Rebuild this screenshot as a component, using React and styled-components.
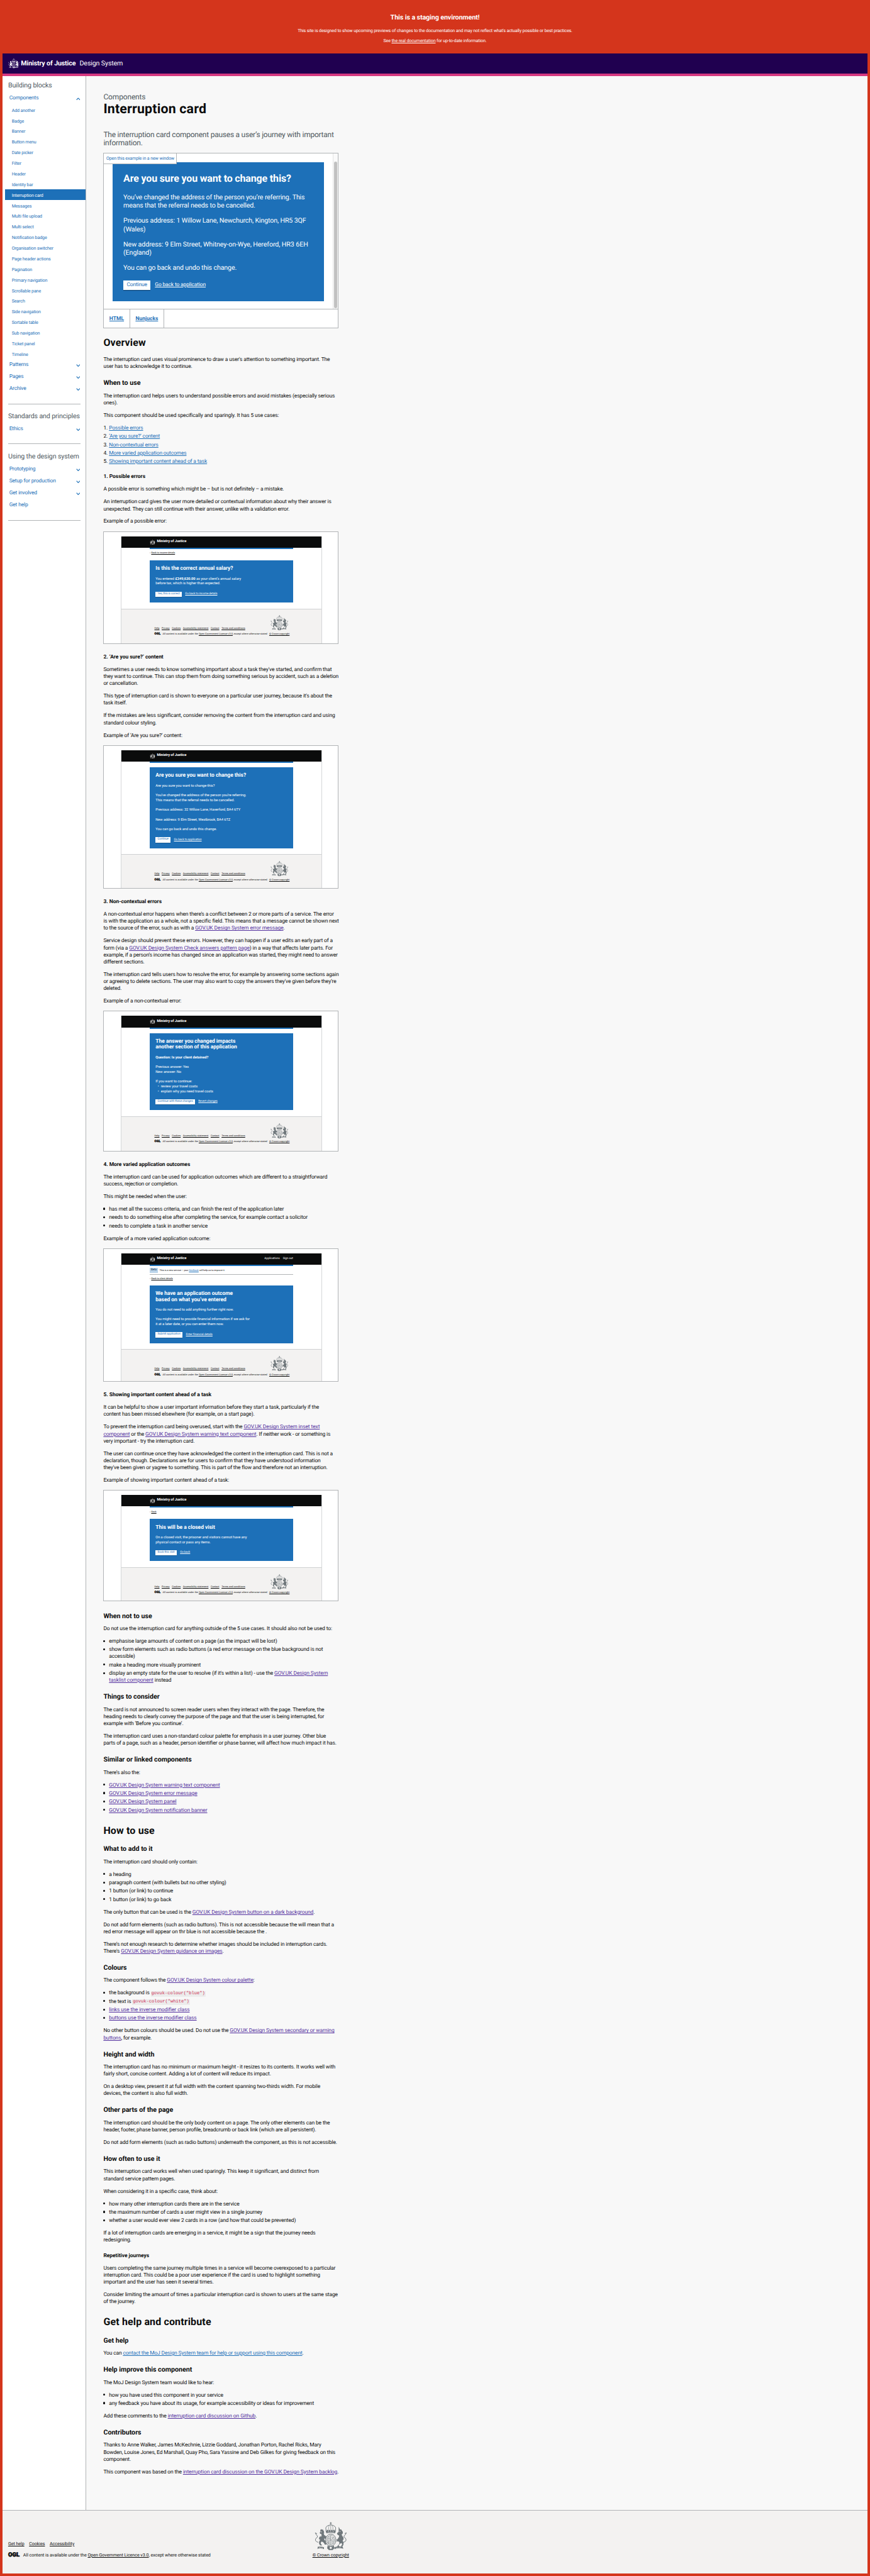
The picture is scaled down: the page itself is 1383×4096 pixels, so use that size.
import React from "react";
import styled, { createGlobalStyle, css } from "styled-components";

const SCALE = 1383 / 3112;

const c = {
  red: "#d4351c",
  purple: "#200050",
  pink: "#d53880",
  blue: "#1d70b8",
  visited: "#54319f",
  text: "#0b0c0c",
  secondary: "#505a5f",
  border: "#b1b4b6",
  panel: "#f8f8f8",
  footer: "#f3f2f1",
};

const Global = createGlobalStyle`
  html, body { margin: 0; padding: 0; background: ${c.red}; }
  *, *::before, *::after { box-sizing: border-box; }
  h1, h2, h3, h4, p, ul, ol { margin: 0; padding: 0; }
  ul, ol { list-style: none; }
`;

const Page = styled.div`
  zoom: ${SCALE};
  width: 3112px;
  height: 9216px;
  display: flex;
  flex-direction: column;
  border: 10px solid ${c.red};
  border-top: 0;
  background: ${c.red};
  color: ${c.text};
  font-family: Roboto, "Liberation Sans", sans-serif;
  font-size: 19px;
  line-height: 25px;
  letter-spacing: -0.0165em;
  text-rendering: geometricPrecision;
  white-space: nowrap;
  a {
    color: inherit;
    text-decoration: underline;
    text-decoration-thickness: 1px;
    text-underline-offset: 0.16em;
  }
`;

/* ---------- staging banner and header ---------- */

const Staging = styled.div`
  height: 190.7px;
  padding-top: 47.8px;
  color: #fff;
  text-align: center;
`;
const StagingTitle = styled.h2`
  font-size: 24px;
  line-height: 30px;
  letter-spacing: -0.008em;
  margin-bottom: 18.5px;
`;
const StagingText = styled.p`
  font-size: 16px;
  margin-bottom: 11.7px;
`;

const Header = styled.header`
  height: 82px;
  border-bottom: 10px solid ${c.pink};
  background: ${c.purple};
  color: #fff;
  display: flex;
  align-items: center;
  padding: 0 20px;
  font-size: 24px;
  line-height: 30px;
`;
const HeaderOrg = styled.strong`
  margin: -2px 14px 0 6px;
`;
const HeaderProduct = styled.span`
  margin-top: -2px;
`;

const CrestSvg = styled.svg`
  display: block;
  flex: none;
`;

function Crest({ width, height, color, paper }) {
  return (
    <CrestSvg width={width} height={height} viewBox="46 33 262 228" preserveAspectRatio="none">
      <g fill={color} stroke="none">
        <path d="M174 36h6v5h5v5h-5v6h-6v-6h-5v-5h5z" />
        <path d="M134 96l9 8 8-9 9 8 8-9 9 9 9-9 8 9 9-8 8 9 9-8-6 23q-35 -8-74 0z" />
        <path d="M141 119q36-8 72 0v5q-36-8-72 0z" />
        <path d="M92 100l8-10 6 6 8-4 2 9 8 6-4 6 5 7-5 6 4 12 12 8 14 10 4 10-12-2 6 8-14-2-10-6 2 14 12 10-2 12 8 8-2 6h-14l-4-10-10-10-12-4-6 10 2 10 8 6-2 6-14-2-8-16 2-16 8-12-10-6 2-14 14-14 6-12-12-2-4-8 6-10z" />
        <path d="M241 72l12 22 8-2 6 10 8 12-2 14-8 4 4 12 10 12 2 14-8 14 8 14-2 18-8 14-12 2 4-10 6-8-4-12-14 6-10 14 6 8-4 8-14 2 2-14 14-14 2-16-10-8-16 2 8-8-8-6 12-6 10-16 2-12-10-4-8-10 4-8 10-6z" />
        <path d="M72 232q26-4 50 4l0 14q-24-8-46-4l-6 4zM206 236q30-10 68-4l4 16-12-4q-30-4-58 6z" />
        <path d="M152 222l12 6 13-6 13 6 12-6 4 22-14 14h-30l-14-14z" />
      </g>
      <g fill="none" stroke={color} strokeWidth="5">
        <path d="M140 98q-10-24 12-34 13-6 25-8 12 2 25 8 22 10 12 34" />
        <path d="M177 54v44M160 98q-4-24 6-38M194 98q4-24-6-38" strokeWidth="3" />
        <path d="M76 196q-26-6-22-24 4-12 14-16 8-12-8-20l-8-16 14 8" />
        <path d="M278 196q26-6 22-24-4-12-14-16-8-12 8-20l10-16-14 6" />
      </g>
      <ellipse cx="177" cy="178" rx="42" ry="48" fill={paper} stroke={color} strokeWidth="5" />
      <ellipse cx="177" cy="178" rx="32" ry="38" fill={paper} stroke={color} strokeWidth="3" />
      <g stroke={color} strokeWidth="4" fill="none">
        <path d="M177 142v72M146 178h62M152 154h20M150 166h24M186 156l14 12M200 154l-12 14M156 186v22M164 184v28M184 190h20M184 202h18" />
      </g>
      <g fill={paper}>
        <circle cx="158" cy="110" r="3" />
        <circle cx="177" cy="109" r="3" />
        <circle cx="196" cy="110" r="3" />
        <circle cx="177" cy="240" r="9" />
        <path d="M82 236h6v5h-6zM94 237h5v5h-5zM106 239h5v5h-5zM218 239h5v5h-5zM232 237h5v5h-5zM248 236h6v5h-6z" />
        <path d="M98 108l8 4-6 6zM96 138l10 6-12 8zM250 104l6 6-8 2z" />
      </g>
    </CrestSvg>
  );
}

/* ---------- layout ---------- */

const Body = styled.div`
  display: flex;
  height: 8707.3px;
`;
const Sidebar = styled.nav`
  width: 300px;
  flex: none;
  padding: 18.4px 0 0 20px;
  background: #fff;
  border-right: 1px solid ${c.border};
  color: ${c.blue};
`;
const NavHeading = styled.h3`
  font-size: 24px;
  font-weight: 400;
  line-height: 30px;
  color: ${c.secondary};
  margin-bottom: 10px;
`;
const NavRow = styled.div`
  height: 42.8px;
  padding: 1px 20px 0 4px;
  display: flex;
  align-items: center;
  justify-content: space-between;
`;
const NavSub = styled.div`
  height: 38px;
  margin-left: -10px;
  padding: 3.4px 0 0 23px;
  font-size: 16px;
  line-height: 35.4px;
  ${(p) => p.$current && css`background: ${c.blue}; color: #fff;`}
`;
const NavRule = styled.div`
  width: 260px;
  height: 0;
  margin: 30px 0 29px;
  border-top: 2px solid ${c.border};
`;
const ChevronSvg = styled.svg`
  display: block;
  ${(p) => p.$up && css`transform: rotate(180deg);`}
`;
const Chevron = ({ up }) => (
  <ChevronSvg $up={up} width="15" height="10" viewBox="0 0 15 10">
    <path d="M1.5 1.5L7.5 8L13.5 1.5" fill="none" stroke={c.blue} strokeWidth="2.6" />
  </ChevronSvg>
);

const Main = styled.main`
  width: 901px;
  padding: 60.8px 0 0 61px;
`;
const MainArea = styled.div`
  flex: 1;
  background: ${c.panel};
`;
const Caption = styled.span`
  display: block;
  font-size: 27px;
  line-height: 30px;
  color: ${c.secondary};
  margin-bottom: 4px;
`;
const H1 = styled.h1`
  font-size: 48px;
  line-height: 50px;
  letter-spacing: 0.008em;
  margin-bottom: 51px;
`;
const Lead = styled.p`
  font-size: 27px;
  line-height: 30px;
  letter-spacing: -0.0195em;
  color: ${c.secondary};
  margin-bottom: 18.7px;
`;
const H2 = styled.h2`
  font-size: 36px;
  line-height: 40px;
  letter-spacing: 0.009em;
  margin: 39.5px 0 30px;
`;
const H3 = styled.h3`
  font-size: 24px;
  line-height: 30px;
  letter-spacing: 0;
  margin: 29.2px 0 20.6px;
`;
const H4 = styled.h4`
  letter-spacing: -0.002em;
  margin: 29.5px 0 20px;
`;
const P = styled.p`
  margin-bottom: 20px;
`;
const List = styled.ul`
  margin-bottom: 20px;
`;
const Item = styled.li`
  padding-left: 20px;
  margin-bottom: 5px;
  &:last-child { margin-bottom: 0; }
  &::before {
    content: "";
    display: inline-block;
    width: 7px;
    height: 7px;
    margin: 0 14.5px 0 -21.5px;
    border-radius: 50%;
    background: ${c.text};
    vertical-align: 3px;
  }
`;
const Numbered = styled(List)`
  counter-reset: step;
`;
const Step = styled(Item)`
  counter-increment: step;
  &::before {
    content: counter(step) ".";
    width: 20px;
    height: auto;
    margin: 0 0 0 -20px;
    background: none;
    border-radius: 0;
    vertical-align: baseline;
  }
`;
const LinkNew = styled.a`
  && { color: ${c.blue}; }
`;
const V = styled.a`
  &&& { color: ${c.visited}; letter-spacing: -0.01em; }
`;
const L = ({ children }) => <LinkNew as="a">{children}</LinkNew>;
const Code = styled.code`
  font-family: "Liberation Mono", monospace;
  font-size: 16px;
  line-height: 1;
  letter-spacing: 0;
  color: #cf2f55;
  background: #ececec;
  padding: 1px 2px;
`;

/* ---------- live example ---------- */

const Example = styled.section`
  width: 840px;
  height: 628.2px;
  margin-bottom: 31px;
  border: 2px solid ${c.border};
  background: #fff;
  display: flex;
  flex-direction: column;
  & + h2 { margin-top: 0; }
`;
const ExampleView = styled.div`
  position: relative;
  flex: 1;
  display: flex;
  justify-content: space-between;
  border-bottom: 2px solid ${c.border};
`;
const OpenLink = styled.span`
  position: absolute;
  top: 0;
  left: 0;
  width: 260px;
  height: 37px;
  padding: 6px 0 0 8px;
  background: #fff;
  border: solid ${c.border};
  border-width: 0 2px 2px 0;
  font-size: 16px;
  line-height: 22px;
  color: ${c.blue};
`;
const BigCard = styled.div`
  width: 757px;
  height: 497px;
  margin: 32.3px 0 0 30px;
  padding: 38px 39px;
  background: ${c.blue};
  color: #fff;
  font-size: 24px;
  line-height: 30px;
`;
const BigTitle = styled.h2`
  font-size: 36px;
  line-height: 40px;
  letter-spacing: -0.0095em;
  margin-bottom: 30.8px;
`;
const BigText = styled.p`
  margin-bottom: 24.3px;
  ${(p) => p.$loose && css`letter-spacing: -0.008em;`}
`;
const Actions = styled.div`
  display: flex;
  align-items: center;
  gap: 16px;
  margin-top: 30px;
  font-size: 19px;
  line-height: 25px;
`;
const Button = styled.span`
  padding: 6px 12px 4px;
  background: #fff;
  color: ${c.blue};
  box-shadow: 0 3px 0 #144e81;
`;
const ScrollTrack = styled.div`
  width: 17px;
  background: #fafafa;
  border-left: 2px solid #e4e4e4;
  padding: 29px 0 4px 3px;
`;
const ScrollThumb = styled.div`
  width: 10px;
  height: 100%;
  border-radius: 5px;
  background: #c1c1c1;
`;
const Tabs = styled.div`
  display: flex;
  height: 65px;
  color: ${c.blue};
  font-weight: 700;
  letter-spacing: 0.006em;
`;
const Tab = styled.span`
  padding: 21.5px 20px 0 19px;
  border-right: 2px solid ${c.border};
`;

/* ---------- framed examples ---------- */

const Frame = styled.figure`
  width: 841px;
  height: ${(p) => p.$h}px;
  margin: 21px 0 36.3px;
  padding: 15px 0 0 60px;
  border: 2px solid ${c.border};
  background: #fff;
  overflow: hidden;
`;
const Screen = styled.div`
  width: 719px;
  border: solid #d5d7d8;
  border-width: 0 1.5px;
  height: 700px;
  font-size: 12.9px;
  line-height: 17.35px;
  letter-spacing: -0.009em;
`;
const ScreenBar = styled.div`
  height: 41.5px;
  margin: 0 -1px;
  padding: 0 102px;
  display: flex;
  align-items: center;
  background: ${c.text};
  color: #fff;
  strong { margin: 1px auto 0 6px; font-size: 13px; letter-spacing: -0.0165em; }
`;
const ScreenNav = styled.span`
  margin-left: 11px;
  font-size: 10.2px;
`;
const ScreenBody = styled.div`
  width: 514px;
  margin-left: 101px;
  border-top: 5.5px solid ${c.blue};
  font-size: 8.7px;
`;
const Phase = styled.div`
  display: flex;
  align-items: center;
  gap: 6px;
  padding: 6.5px 0 5px;
  border-bottom: 2px solid ${c.border};
`;
const Tag = styled.span`
  width: 29px;
  height: 17.5px;
  background: #bbd4ea;
  color: #0c2d4a;
  font-size: 10.2px;
  text-align: center;
`;
const Back = styled.div`
  display: flex;
  align-items: center;
  gap: 3px;
  height: ${(p) => (p.$tight ? 38 : 40.5)}px;
  padding-bottom: ${(p) => (p.$tight ? 12 : 13)}px;
`;
const Gap = styled.div`
  height: 16px;
`;
const Card = styled.div`
  padding: 21px 21px 20px;
  background: ${c.blue};
  color: #fff;
  font-size: 12.9px;
  margin-bottom: 21.5px;
`;
const CardTitle = styled.h3`
  font-size: 19.2px;
  line-height: 21.4px;
  letter-spacing: -0.004em;
  margin-bottom: 17.6px;
`;
const CardText = styled.p`
  margin-bottom: 17.2px;
`;
const CardBullet = styled.span`
  display: inline-block;
  width: 19px;
  padding-left: 8px;
`;
const CardActions = styled.div`
  display: flex;
  align-items: center;
  gap: 12.5px;
  font-size: 10.25px;
`;
const CardButton = styled.span`
  padding: 0 7px;
  line-height: 19px;
  background: #fff;
  color: ${c.blue};
  letter-spacing: -0.0165em;
  box-shadow: 0 1.5px 0 #144e81;
`;
const ScreenFooter = styled.div`
  height: 300px;
  border-top: 1.5px solid #cfd1d2;
  background: ${c.footer};
  display: flex;
  padding: 22px 0 0 118px;
  font-size: 8.7px;
  line-height: 14px;
  letter-spacing: 0.006em;
`;
const ScreenMeta = styled.div`
  width: 411px;
  padding-top: 39px;
`;
const MetaLinks = styled.div`
  display: flex;
  gap: ${(p) => p.$gap}px;
  margin-bottom: ${(p) => p.$mb}px;
`;
const Licence = styled.div`
  display: flex;
  align-items: center;
`;
const Ogl = styled.strong`
  width: ${(p) => p.$w}px;
  font-size: ${(p) => p.$size}px;
  font-weight: 900;
  letter-spacing: 0.02em;
  -webkit-text-stroke: 0.07em ${c.text};
`;
const Copyright = styled.div`
  display: flex;
  flex-direction: column;
  align-items: center;
  width: ${(p) => p.$w}px;
  gap: ${(p) => p.$gap}px;
`;

function Screenshot({ height, nav, phase, back, title, children, action, secondary }) {
  return (
    <Frame $h={height}>
      <Screen>
        <ScreenBar>
          <Crest width={20} height={17.5} color="#fff" paper="#0b0c0c" />
          <strong>Ministry of Justice</strong>
          {nav && nav.map((n) => <ScreenNav key={n}>{n}</ScreenNav>)}
        </ScreenBar>
        <ScreenBody>
          {phase && (
            <Phase>
              <Tag>Beta</Tag>
              <span>This is a new service – your <L>feedback</L> will help us to improve it.</span>
            </Phase>
          )}
          {back ? <Back $tight={phase}><span>‹</span><a>{back}</a></Back> : <Gap />}
          <Card>
            <CardTitle>{title}</CardTitle>
            {children}
            <CardActions>
              <CardButton>{action}</CardButton>
              <a>{secondary}</a>
            </CardActions>
          </Card>
        </ScreenBody>
        <ScreenFooter>
          <ScreenMeta>
            <MetaLinks $gap={8} $mb={7.3}>
              <a>Help</a><a>Privacy</a><a>Cookies</a><a>Accessibility statement</a><a>Contact</a><a>Terms and conditions</a>
            </MetaLinks>
            <Licence>
              <Ogl $w={29.5} $size={11}>OGL</Ogl>
              <span>All content is available under the <a>Open Government Licence v3.0</a>, except where otherwise stated</span>
            </Licence>
          </ScreenMeta>
          <Copyright $w={72} $gap={5.5}>
            <Crest width={64} height={54.5} color="#6f777b" paper={c.footer} />
            <a>© Crown copyright</a>
          </Copyright>
        </ScreenFooter>
      </Screen>
    </Frame>
  );
}

/* ---------- footer ---------- */

const Footer = styled.footer`
  flex: 1;
  display: flex;
  padding: 40px 0 0 20px;
  border-top: 2px solid ${c.border};
  background: ${c.footer};
  font-size: 16px;
  line-height: 24px;
  letter-spacing: -0.006em;
`;
const FooterMeta = styled.div`
  width: 1088px;
  padding-top: 68.5px;
`;

const components = [
  "Add another", "Badge", "Banner", "Button menu", "Date picker", "Filter", "Header", "Identity bar",
  "Interruption card", "Messages", "Multi file upload", "Multi select", "Notification badge",
  "Organisation switcher", "Page header actions", "Pagination", "Primary navigation", "Scrollable pane",
  "Search", "Side navigation", "Sortable table", "Sub navigation", "Ticket panel", "Timeline",
];

export default function App() {
  return (
    <>
      <Global />
      <Page>
        <Staging>
          <StagingTitle>This is a staging environment!</StagingTitle>
          <StagingText>This site is designed to show upcoming previews of changes to the documentation and may not reflect what's actually possible or best practices.</StagingText>
          <StagingText>See <a>the real documentation</a> for up-to-date information.</StagingText>
        </Staging>
        <Header>
          <Crest width={40} height={35} color="#fff" paper={c.purple} />
          <HeaderOrg>Ministry of Justice</HeaderOrg>
          <HeaderProduct>Design System</HeaderProduct>
        </Header>
        <Body>
          <Sidebar>
            <NavHeading>Building blocks</NavHeading>
            <NavRow>Components<Chevron up /></NavRow>
            {components.map((n) => <NavSub key={n} $current={n === "Interruption card"}>{n}</NavSub>)}
            <NavRow>Patterns<Chevron /></NavRow>
            <NavRow>Pages<Chevron /></NavRow>
            <NavRow>Archive<Chevron /></NavRow>
            <NavRule />
            <NavHeading>Standards and principles</NavHeading>
            <NavRow>Ethics<Chevron /></NavRow>
            <NavRule />
            <NavHeading>Using the design system</NavHeading>
            <NavRow>Prototyping<Chevron /></NavRow>
            <NavRow>Setup for production<Chevron /></NavRow>
            <NavRow>Get involved<Chevron /></NavRow>
            <NavRow>Get help</NavRow>
            <NavRule />
          </Sidebar>
          <MainArea>
            <Main>
              <Caption>Components</Caption>
              <H1>Interruption card</H1>
              <Lead>The interruption card component pauses a user’s journey with important<br />information.</Lead>
              <Example>
                <ExampleView>
                  <BigCard>
                    <BigTitle>Are you sure you want to change this?</BigTitle>
                    <BigText>You’ve changed the address of the person you’re referring. This<br />means that the referral needs to be cancelled.</BigText>
                    <BigText>Previous address: 1 Willow Lane, Newchurch, Kington, HR5 3QF<br />(Wales)</BigText>
                    <BigText $loose>New address: 9 Elm Street, Whitney-on-Wye, Hereford, HR3 6EH<br />(England)</BigText>
                    <BigText>You can go back and undo this change.</BigText>
                    <Actions><Button>Continue</Button><a>Go back to application</a></Actions>
                  </BigCard>
                  <ScrollTrack><ScrollThumb /></ScrollTrack>
                  <OpenLink>Open this example in a new window</OpenLink>
                </ExampleView>
                <Tabs><Tab><a>HTML</a></Tab><Tab><a>Nunjucks</a></Tab></Tabs>
              </Example>

              <H2>Overview</H2>
              <P>The interruption card uses visual prominence to draw a user's attention to something important. The<br />user has to acknowledge it to continue.</P>
              <H3>When to use</H3>
              <P>The interruption card helps users to understand possible errors and avoid mistakes (especially serious<br />ones).</P>
              <P>This component should be used specifically and sparingly. It has 5 use cases:</P>
              <Numbered as="ol">
                <Step><L>Possible errors</L></Step>
                <Step><L>‘Are you sure?’ content</L></Step>
                <Step><L>Non-contextual errors</L></Step>
                <Step><L>More varied application outcomes</L></Step>
                <Step><L>Showing important content ahead of a task</L></Step>
              </Numbered>
              <H4>1. Possible errors</H4>
              <P>A possible error is something which might be – but is not definitely – a mistake.</P>
              <P>An interruption card gives the user more detailed or contextual information about why their answer is<br />unexpected. They can still continue with their answer, unlike with a validation error.</P>
              <P>Example of a possible error:</P>
              <Screenshot height={403} back="Back to income details" title="Is this the correct annual salary?" action="Yes, this is correct" secondary="Go back to income details">
                <CardText>You entered <b>£349,630.00</b> as your client’s annual salary<br />before tax, which is higher than expected.</CardText>
              </Screenshot>

              <H4>2. ‘Are you sure?’ content</H4>
              <P>Sometimes a user needs to know something important about a task they've started, and confirm that<br />they want to continue. This can stop them from doing something serious by accident, such as a deletion<br />or cancellation.</P>
              <P>This type of interruption card is shown to everyone on a particular user journey, because it's about the<br />task itself.</P>
              <P>If the mistakes are less significant, consider removing the content from the interruption card and using<br />standard colour styling.</P>
              <P>Example of ‘Are you sure?’ content:</P>
              <Screenshot height={513.5} title="Are you sure you want to change this?" action="Continue" secondary="Go back to application">
                <CardText>Are you sure you want to change this?</CardText>
                <CardText>You’ve changed the address of the person you’re referring.<br />This means that the referral needs to be cancelled.</CardText>
                <CardText>Previous address: 32 Willow Lane, Haverford, BA4 6TY</CardText>
                <CardText>New address: 9 Elm Street, Westbrook, BA4 6TZ</CardText>
                <CardText>You can go back and undo this change.</CardText>
              </Screenshot>

              <H4>3. Non-contextual errors</H4>
              <P>A non-contextual error happens when there’s a conflict between 2 or more parts of a service. The error<br />is with the application as a whole, not a specific field. This means that a message cannot be shown next<br />to the source of the error, such as with a <V>GOV.UK Design System error message</V>.</P>
              <P>Service design should prevent these errors. However, they can happen if a user edits an early part of a<br />form (via a <V>GOV.UK Design System Check answers pattern page</V>) in a way that affects later parts. For<br />example, if a person’s income has changed since an application was started, they might need to answer<br />different sections.</P>
              <P>The interruption card tells users how to resolve the error, for example by answering some sections again<br />or agreeing to delete sections. The user may also want to copy the answers they've given before they’re<br />deleted.</P>
              <P>Example of a non-contextual error:</P>
              <Screenshot height={502.5} title={<>The answer you changed impacts<br />another section of this application</>} action="Continue with these changes" secondary="Revert changes">
                <CardText><b>Question: Is your client detained?</b></CardText>
                <CardText>Previous answer: Yes<br />New answer: No</CardText>
                <CardText>If you want to continue:<br /><CardBullet>•</CardBullet>review your travel costs<br /><CardBullet>•</CardBullet>explain why you need travel costs</CardText>
              </Screenshot>

              <H4>4. More varied application outcomes</H4>
              <P>The interruption card can be used for application outcomes which are different to a straightforward<br />success, rejection or completion.</P>
              <P>This might be needed when the user:</P>
              <List>
                <Item>has met all the success criteria, and can finish the rest of the application later</Item>
                <Item>needs to do something else after completing the service, for example contact a solicitor</Item>
                <Item>needs to complete a task in another service</Item>
              </List>
              <P>Example of a more varied application outcome:</P>
              <Screenshot height={477.5} nav={["Applications", "Sign out"]} phase back="Back to client details" title={<>We have an application outcome<br />based on what you’ve entered</>} action="Submit application" secondary="Enter financial details">
                <CardText>You do not need to add anything further right now.</CardText>
                <CardText>You might need to provide financial information if we ask for<br />it at a later date, or you can enter them now.</CardText>
              </Screenshot>

              <H4>5. Showing important content ahead of a task</H4>
              <P>It can be helpful to show a user important information before they start a task, particularly if the<br />content has been missed elsewhere (for example, on a start page).</P>
              <P>To prevent the interruption card being overused, start with the <V>GOV.UK Design System inset text<br />component</V> or the <V>GOV.UK Design System warning text component</V>. If neither work - or something is<br />very important - try the interruption card.</P>
              <P>The user can continue once they have acknowledged the content in the interruption card. This is not a<br />declaration, though. Declarations are for users to confirm that they have understood information<br />they've been given or yagree to something. This is part of the flow and therefore not an interruption.</P>
              <P>Example of showing important content ahead of a task:</P>
              <Screenshot height={398.6} back="Back" title="This will be a closed visit" action="Book this visit" secondary="Go back">
                <CardText>On a closed visit, the prisoner and visitors cannot have any<br />physical contact or pass any items.</CardText>
              </Screenshot>

              <H3>When not to use</H3>
              <P>Do not use the interruption card for anything outside of the 5 use cases. It should also not be used to:</P>
              <List>
                <Item>emphasise large amounts of content on a page (as the impact will be lost)</Item>
                <Item>show form elements such as radio buttons (a red error message on the blue background is not<br />accessible)</Item>
                <Item>make a heading more visually prominent</Item>
                <Item>display an empty state for the user to resolve (if it's within a list) - use the <V>GOV.UK Design System<br />tasklist component</V> instead</Item>
              </List>
              <H3>Things to consider</H3>
              <P>The card is not announced to screen reader users when they interact with the page. Therefore, the<br />heading needs to clearly convey the purpose of the page and that the user is being interrupted, for<br />example with ‘Before you continue’.</P>
              <P>The interruption card uses a non-standard colour palette for emphasis in a user journey. Other blue<br />parts of a page, such as a header, person identifier or phase banner, will affect how much impact it has.</P>
              <H3>Similar or linked components</H3>
              <P>There’s also the:</P>
              <List>
                <Item><V>GOV.UK Design System warning text component</V></Item>
                <Item><V>GOV.UK Design System error message</V></Item>
                <Item><V>GOV.UK Design System panel</V></Item>
                <Item><V>GOV.UK Design System notification banner</V></Item>
              </List>

              <H2>How to use</H2>
              <H3>What to add to it</H3>
              <P>The interruption card should only contain:</P>
              <List>
                <Item>a heading</Item>
                <Item>paragraph content (with bullets but no other styling)</Item>
                <Item>1 button (or link) to continue</Item>
                <Item>1 button (or link) to go back</Item>
              </List>
              <P>The only button that can be used is the <V>GOV.UK Design System button on a dark background</V>.</P>
              <P>Do not add form elements (such as radio buttons). This is not accessible because the will mean that a<br />red error message will appear on thr blue is not accessible because the .</P>
              <P>There’s not enough research to determine whether images should be included in interruption cards.<br />There's <V>GOV.UK Design System guidance on images</V>.</P>
              <H3>Colours</H3>
              <P>The component follows the <V>GOV.UK Design System colour palette</V>:</P>
              <List>
                <Item>the background is <Code>govuk-colour("blue")</Code></Item>
                <Item>the text is <Code>govuk-colour("white")</Code></Item>
                <Item><V>links use the inverse modifier class</V></Item>
                <Item><V>buttons use the inverse modifier class</V></Item>
              </List>
              <P>No other button colours should be used. Do not use the <V>GOV.UK Design System secondary or warning<br />buttons</V>, for example.</P>
              <H3>Height and width</H3>
              <P>The interruption card has no minimum or maximum height - it resizes to its contents. It works well with<br />fairly short, concise content. Adding a lot of content will reduce its impact.</P>
              <P>On a desktop view, present it at full width with the content spanning two-thirds width. For mobile<br />devices, the content is also full width.</P>
              <H3>Other parts of the page</H3>
              <P>The interruption card should be the only body content on a page. The only other elements can be the<br />header, footer, phase banner, person profile, breadcrumb or back link (which are all persistent).</P>
              <P>Do not add form elements (such as radio buttons) underneath the component, as this is not accessible.</P>
              <H3>How often to use it</H3>
              <P>This interruption card works well when used sparingly. This keep it significant, and distinct from<br />standard service pattern pages.</P>
              <P>When considering it in a specific case, think about:</P>
              <List>
                <Item>how many other interruption cards there are in the service</Item>
                <Item>the maximum number of cards a user might view in a single journey</Item>
                <Item>whether a user would ever view 2 cards in a row (and how that could be prevented)</Item>
              </List>
              <P>If a lot of interruption cards are emerging in a service, it might be a sign that the journey needs<br />redesigning.</P>
              <H4>Repetitive journeys</H4>
              <P>Users completing the same journey multiple times in a service will become overexposed to a particular<br />interruption card. This could be a poor user experience if the card is used to highlight something<br />important and the user has seen it several times.</P>
              <P>Consider limiting the amount of times a particular interruption card is shown to users at the same stage<br />of the journey.</P>

              <H2>Get help and contribute</H2>
              <H3>Get help</H3>
              <P>You can <L>contact the MoJ Design System team for help or support using this component</L>.</P>
              <H3>Help improve this component</H3>
              <P>The MoJ Design System team would like to hear:</P>
              <List>
                <Item>how you have used this component in your service</Item>
                <Item>any feedback you have about its usage, for example accessibility or ideas for improvement</Item>
              </List>
              <P>Add these comments to the <V>interruption card discussion on Github</V>.</P>
              <H3>Contributors</H3>
              <P>Thanks to Anne Walker, James McKechnie, Lizzie Goddard, Jonathan Porton, Rachel Ricks, Mary<br />Bowden, Louise Jones, Ed Marshall, Quay Pho, Sara Yassine and Deb Gilkes for giving feedback on this<br />component.</P>
              <P>This component was based on the <V>interruption card discussion on the GOV.UK Design System backlog</V>.</P>
            </Main>
          </MainArea>
        </Body>
        <Footer>
          <FooterMeta>
            <MetaLinks $gap={17} $mb={16}>
              <a>Get help</a><a>Cookies</a><a>Accessibility</a>
            </MetaLinks>
            <Licence>
              <Ogl $w={54} $size={21}>OGL</Ogl>
              <span>All content is available under the <a>Open Government Licence v3.0</a>, except where otherwise stated</span>
            </Licence>
          </FooterMeta>
          <Copyright $w={132} $gap={7}>
            <Crest width={116} height={102} color="#6f777b" paper={c.footer} />
            <a>© Crown copyright</a>
          </Copyright>
        </Footer>
      </Page>
    </>
  );
}
